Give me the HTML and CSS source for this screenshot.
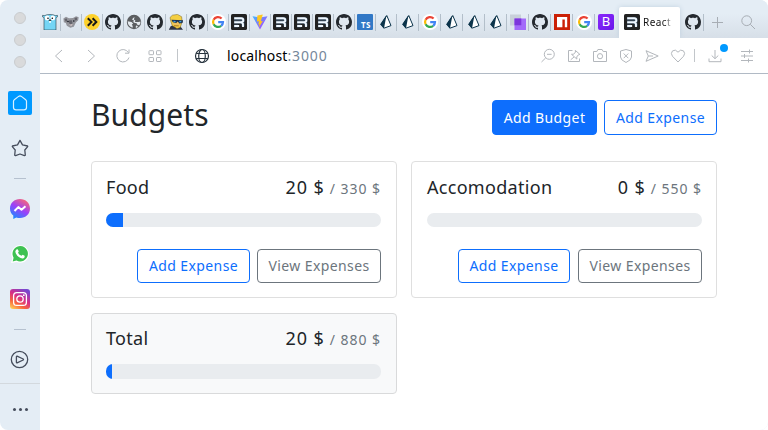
FILE: index.html
```html
<!DOCTYPE html>
<html lang="en">
<head>
<meta charset="utf-8">
<title>React App</title>
<link rel="stylesheet" href="styles.css">
</head>
<body>
<svg class="defs" aria-hidden="true">
  <defs>
    <linearGradient id="vg" x1="0" y1="0" x2="1" y2="1"><stop offset="0" stop-color="#41b9ff"/><stop offset="1" stop-color="#bd34fe"/></linearGradient>
    <linearGradient id="mg" x1=".2" y1="1" x2=".8" y2="0"><stop offset="0" stop-color="#1490ff"/><stop offset=".5" stop-color="#9a40fa"/><stop offset="1" stop-color="#ff6a70"/></linearGradient>
    <linearGradient id="ig" x1=".1" y1="1" x2=".7" y2="0"><stop offset="0" stop-color="#ffd15a"/><stop offset=".3" stop-color="#f8653c"/><stop offset=".6" stop-color="#d62e89"/><stop offset="1" stop-color="#7747cf"/></linearGradient>
  </defs>
  <symbol id="github" viewBox="0 0 16 16"><path fill="#24292f" d="M8 0C3.58 0 0 3.58 0 8c0 3.54 2.29 6.53 5.47 7.59.4.07.55-.17.55-.38 0-.19-.01-.82-.01-1.49-2.01.37-2.53-.49-2.69-.94-.09-.23-.48-.94-.82-1.13-.28-.15-.68-.52-.01-.53.63-.01 1.08.58 1.23.82.72 1.21 1.87.87 2.33.66.07-.52.28-.87.51-1.07-1.78-.2-3.64-.89-3.64-3.95 0-.87.31-1.59.82-2.15-.08-.2-.36-1.02.08-2.12 0 0 .67-.21 2.2.82.64-.18 1.32-.27 2-.27s1.36.09 2 .27c1.53-1.04 2.2-.82 2.2-.82.44 1.1.16 1.92.08 2.12.51.56.82 1.27.82 2.15 0 3.07-1.87 3.75-3.65 3.95.29.25.54.73.54 1.48 0 1.07-.01 1.93-.01 2.2 0 .21.15.46.55.38A8.01 8.01 0 0 0 16 8c0-4.42-3.58-8-8-8z"/></symbol>
  <symbol id="google" viewBox="0 0 16 16"><circle cx="8" cy="8" r="8" fill="#fff"/><g fill="none" stroke-width="2.2"><path stroke="#ea4335" d="M3.6 5.8A5 5 0 0 1 11.6 4.5"/><path stroke="#fbbc05" d="M3.6 10.2A5 5 0 0 1 3.6 5.8"/><path stroke="#34a853" d="M11.2 11.8A5 5 0 0 1 3.6 10.2"/><path stroke="#4285f4" d="M8.2 8.1H13A5 5 0 0 1 11.2 11.8"/></g></symbol>
  <symbol id="remix" viewBox="0 0 16 16"><rect width="16" height="16" rx="1.6" fill="#212121"/><path fill="none" stroke="#567a9c" stroke-width="3.2" opacity=".55" d="M3 4.600h7.200q2 0 2 1.800T10.200 8.200H3M9.500 8.300q2.400.2 2.500 2.200v2M3 12h4"/><path fill="none" stroke="#f0f8ff" stroke-width="1.900" d="M3.200 4.300h6.900q2.200 0 2.200 1.900T10.100 8.200H3.200M10 8.200q2 .3 2 2.200v2.700M3.200 12h4v1.100"/></symbol>
  <symbol id="prisma" viewBox="0 0 16 16"><path fill="#fff" stroke="#0c344b" stroke-width="1" stroke-linejoin="round" d="M8.800 1.600 13 11.600 6.200 14.100 3 10.400Z"/><path fill="#0c344b" d="M8.500 1.100 2.200 10.200 5.900 14.800Z"/></symbol>
  <symbol id="gopher" viewBox="0 0 16 16"><path fill="#74d5f5" stroke="#263b45" stroke-width=".6" d="M2 16V3.600L.5 2.800V1.400L2.800 1.600Q4.500.5 8 .5t5.200 1.100l2.300-.2v1.400L14 3.600V16Z"/><circle cx="5.200" cy="4" r="2.400" fill="#fff"/><circle cx="10.800" cy="4" r="2.400" fill="#fff"/><circle cx="6" cy="4.200" r=".8"/><circle cx="10.300" cy="4.200" r=".8"/><ellipse cx="8" cy="6.200" rx="1.400" ry=".8" fill="#333"/><path fill="#fff" d="M7.200 7h1.700v1.800H7.200z"/></symbol>
  <symbol id="koala" viewBox="0 0 16 16"><path fill="#94959b" d="M.4 4.500 3 2.800 6 4.200 10 4l3-1.800 2.700 1.100-.5 3-2.400 2.200-2 4.200-3.500 1-3.500-2-1-2.700L.8 8.200Z"/><path fill="#64646c" d="m1.500 5 2.400-.6.4 3-1.800.2Zm10-1 2.600-.4-.2 2.400-2 .5ZM6 6.500l2.800-.3.8 3-2.200 1.500L6 9Z"/><circle cx="5" cy="7.500" r=".8" fill="#141820"/><circle cx="10.800" cy="7" r=".8" fill="#141820"/><path fill="#dacaca" d="m6 10.700 3.800-.6-1.500 1.900Z"/></symbol>
  <symbol id="chevrons" viewBox="0 0 16 16"><circle cx="8" cy="8" r="8" fill="#fdd12b"/><path fill="none" stroke="#181818" stroke-width="2" d="m3.800 4.200 3.700 3.700-3.700 3.800M8.600 4.200l3.700 3.700-3.700 3.800"/></symbol>
  <symbol id="earth" viewBox="0 0 16 16"><circle cx="8" cy="8" r="7.200" fill="#5b5e61"/><path fill="#e4eaef" d="M8.700 3.300 7.800 5.400l1.600 1L8.900 7.900h3.600L14.500 7.600Q14.700 9.600 13.300 11.300L11.600 11 10.600 9.300 8.200 8.700 6.500 7.500H8L7.600 6.200 6.100 5.800 7 4ZM1.600 7.200 5.500 8l1.600 1.600-1.300 1.200 1 1.300-.3 1.700Q2 12.300 1.600 7.200ZM9.500 13l1.200-1.700 1.300 1.400-1.800 1.200Z"/></symbol>
  <symbol id="hero" viewBox="0 0 16 16"><path fill="#2d3446" d="M.8 15.800 2.800 12l2.500-.5 6.700.4 3 3.900Z"/><path fill="#f4cf43" stroke="#76621e" stroke-width=".5" d="M2.800 7.300 2 3.500 4.400 1.200 9.500.4l4.100 2.300.6 5-2 5.800-3.200 1.100-4.800-3.100Z"/><path fill="#edc15e" d="m4.700 8 8.800-.2-1.900 4.300-3 1.200-3.700-3Z"/><path fill="#1d3151" d="m3.300 5.800 11.800.5-.6 2.700-3.200.5-1.500-2L8.200 9 4.800 8.300Z"/><path stroke="#3aa4df" stroke-width="1.200" d="m5.500 7.300 2.100.4m3.700-.1 2 .1"/><path stroke="#b48318" d="m6 11.700 4.800.2"/></symbol>
  <symbol id="vite" viewBox="0 0 16 16"><path fill="url(#vg)" d="M.5 2.200 8 15.600l7.500-13.400L8 3.500Z"/><path fill="#ffc71f" d="M10.800.4 5.400 1.500 5 7.500l2-.3-.7 3.400 1.200-.3-.7 3.300L10.800 7l-2 .3 2-6.900Z"/></symbol>
  <symbol id="squares" viewBox="0 0 16 16"><path fill="#c8d0da" d="M0 .5h11v11H0z"/><path fill="#a36bfa" d="M4.500 4.500H16V16H4.500z"/><path fill="#7d36dc" d="M4.500 4.500h6.800v6.800H4.500z"/></symbol>
  <symbol id="npm" viewBox="0 0 16 16"><path fill="#cb2006" d="M0 0h16v16H0z"/><path fill="#fff" d="M3 3h10.200v10.200h-2.400V5.500H8.400v7.700H3z"/></symbol>
</svg>

<div class="window">
  <aside class="sidebar">
    <div class="lights"><i></i><i></i><i></i></div>
    <div class="home"><svg width="24" height="24" viewBox="0 0 24 24"><path d="M5.500 10.300Q5.500 9.400 6.300 8.800L10.600 5.400Q12 4.400 13.400 5.400L17.700 8.800Q18.500 9.400 18.500 10.300V16.500Q18.500 18.900 16 18.900H8Q5.500 18.900 5.500 16.500Z"/></svg></div>
    <svg class="line star" width="20" height="20" viewBox="0 0 20 20"><path d="M10 2.400 7.500 6.900 2.400 8Q2.100 8.500 2.500 8.900L5.200 12 4.700 17.200Q5 17.700 5.600 17.600L10 16 14.400 17.600Q15 17.700 15.300 17.200L14.800 12 17.500 8.900Q17.900 8.500 17.600 8L12.500 6.900Z"/></svg>
    <hr class="short first">
    <svg class="messenger" width="20" height="20" viewBox="0 0 20 20"><path fill="url(#mg)" d="M10 0C4.300 0 0 4 0 9.400c0 3 1.200 5.400 3.300 7.100V20l3-1.500q1.700.5 3.700.5c5.700 0 10-4 10-9.500S15.700 0 10 0Z"/><path fill="none" stroke="#fff" stroke-width="2" stroke-linejoin="round" d="m4.500 12 3.800-3.900 3.200 2.700 4-3.500"/></svg>
    <svg class="whatsapp" width="20" height="20" viewBox="0 0 20 20"><path fill="#fff" d="M1.100 18.900 2.300 14A8.800 8.800 0 1 1 6.500 18Z"/><path fill="#3ec252" d="m2.700 17.400.9-3.700A7.700 7.700 0 1 1 6.500 16.500Z"/><path fill="#fff" d="M6.400 5.500Q7.300 4.800 7.900 5.600l.9 1.900-.8 1.200q1.200 2.300 3.500 3.100l1.100-1 2 1q.5 2-1.500 2.600c-3.700.7-8.200-4.500-7.700-7.300Z"/></svg>
    <svg class="instagram" width="20" height="20" viewBox="0 0 20 20"><rect width="20" height="20" rx="3" fill="url(#ig)"/><g fill="none" stroke="#fff" stroke-width="1.300"><rect x="3.600" y="3.600" width="12.800" height="12.800" rx="3.200"/><circle cx="10" cy="10" r="3.200"/></g><circle cx="13.800" cy="6.200" r=".9" fill="#fff"/></svg>
    <hr class="short second">
    <svg class="line play" width="20" height="20" viewBox="0 0 20 20"><circle cx="9.500" cy="9.500" r="8.200"/><path d="M6.400 6.700Q6.400 6 7.100 6.200L13.200 9Q13.800 9.500 13.200 10L7.100 12.800Q6.400 13 6.400 12.300Z"/></svg>
    <div class="more"><i></i><i></i><i></i></div>
  </aside>

  <div class="main">
    <div class="tabs">
      <div class="tab"><svg><use href="#gopher"/></svg></div>
      <div class="tab"><svg><use href="#koala"/></svg></div>
      <div class="tab"><svg><use href="#chevrons"/></svg></div>
      <div class="tab"><svg><use href="#github"/></svg></div>
      <div class="tab"><svg><use href="#earth"/></svg></div>
      <div class="tab"><svg><use href="#github"/></svg></div>
      <div class="tab"><svg><use href="#hero"/></svg></div>
      <div class="tab"><svg><use href="#github"/></svg></div>
      <div class="tab"><svg><use href="#google"/></svg></div>
      <div class="tab"><svg><use href="#remix"/></svg></div>
      <div class="tab"><svg><use href="#vite"/></svg></div>
      <div class="tab"><svg><use href="#remix"/></svg></div>
      <div class="tab"><svg><use href="#remix"/></svg></div>
      <div class="tab"><svg><use href="#remix"/></svg></div>
      <div class="tab"><svg><use href="#github"/></svg></div>
      <div class="tab"><div class="ts-icon">TS</div></div>
      <div class="tab"><svg><use href="#prisma"/></svg></div>
      <div class="tab wide"><svg><use href="#prisma"/></svg></div>
      <div class="tab wide"><svg><use href="#google"/></svg></div>
      <div class="tab wide"><svg><use href="#prisma"/></svg></div>
      <div class="tab wide"><svg><use href="#prisma"/></svg></div>
      <div class="tab wide"><svg><use href="#prisma"/></svg></div>
      <div class="tab wide"><svg><use href="#squares"/></svg></div>
      <div class="tab wide"><svg><use href="#github"/></svg></div>
      <div class="tab wide"><svg><use href="#npm"/></svg></div>
      <div class="tab wide"><svg><use href="#google"/></svg></div>
      <div class="tab wide last"><div class="bs-icon">B</div></div>
      <div class="tab active"><svg><use href="#remix"/></svg><span>React</span></div>
      <div class="tab after"><svg><use href="#github"/></svg></div>
      <svg class="tool plus" viewBox="0 0 16 16"><path d="M8.500 3v11M3 8.500h11"/></svg>
      <svg class="tool find" viewBox="0 0 16 16"><circle cx="6.700" cy="6.700" r="4.900"/><path d="m10.300 10.300 4.700 4.700"/></svg>
    </div>

    <div class="toolbar">
      <svg class="nav back" viewBox="0 0 16 16"><path d="M11 2 4.500 8l6.500 6"/></svg>
      <svg class="nav forward" viewBox="0 0 16 16"><path d="m5 2 6.500 6L5 14"/></svg>
      <svg class="nav reload" viewBox="0 0 16 16"><path d="M13.400 4.600A6.200 6.200 0 1 0 14 9.500M14 1.500v3.700h-4"/></svg>
      <svg class="nav grid" viewBox="0 0 16 16"><rect x="2" y="2.700" width="4.500" height="4" rx=".6"/><rect x="9.500" y="2.700" width="4.500" height="4" rx=".6"/><rect x="2" y="9.500" width="4.500" height="4" rx=".6"/><rect x="9.500" y="9.500" width="4.500" height="4" rx=".6"/></svg>
      <i class="divider one"></i>
      <svg class="globe" viewBox="0 0 16 16"><circle cx="8" cy="8" r="6.500"/><ellipse cx="8" cy="8" rx="3.300" ry="6.500"/><path d="M2.200 5.500h11.600M2.200 10.500h11.600"/></svg>
      <div class="url">localhost<span>:3000</span></div>
      <div class="actions">
        <svg viewBox="0 0 16 16"><circle cx="9.300" cy="6.300" r="5"/><path d="M5.700 9.900 1.500 14M7 6.300h4.600"/></svg>
        <svg viewBox="0 0 16 16"><path d="M6.500 2.500h-4v11h11v-3M9.300 2.400l4.600 4-1.600.5-1.600 2.100.2 2.100-5.400-4.800 2.200-.1 1.800-2.200ZM8 9l-3.300 2.800"/></svg>
        <svg viewBox="0 0 16 16"><path d="M1.500 3.500h3.300l1.100-2h4.200l1.100 2h3.300v10h-13Z"/><circle cx="8" cy="8.200" r="2.600"/></svg>
        <svg viewBox="0 0 16 16"><path d="M8 1.500 13.500 3v6Q13.500 12 8 14.500 2.500 12 2.500 9V3ZM5.700 5.500l4.600 4.700m0-4.700-4.600 4.700"/></svg>
        <svg viewBox="0 0 16 16"><path d="M2 2.700 14.200 8 2 13.300 4.300 8ZM4.300 8H9"/></svg>
        <svg viewBox="0 0 16 16"><path d="M8 14 2.400 8.200Q.3 5.300 2.500 2.900 5.500.7 8 4.200 10.500.7 13.500 2.900 15.700 5.300 13.600 8.200Z"/></svg>
      </div>
      <i class="divider two"></i>
      <div class="download"><svg viewBox="0 0 16 16"><path d="M8 2v8.500M4.700 7.500 8 10.700l3.300-3.200M2 10.500v3.200h12v-3.200"/></svg><b></b></div>
      <svg class="sliders" viewBox="0 0 16 16"><path d="M2 3.500h12M2 8h12M2 12.500h12M10.500 1.500v4M5.500 6v4M9.500 10.500v4"/></svg>
    </div>

    <main class="page">
      <header class="page-head">
        <h1>Budgets</h1>
        <button class="btn primary">Add Budget</button>
        <button class="btn outline">Add Expense</button>
      </header>
      <div class="cards">
        <section class="card">
          <div class="card-title"><h2>Food</h2><div class="amount">20 $<small>/ 330 $</small></div></div>
          <div class="progress"><div class="bar" style="width:6.06%"></div></div>
          <div class="card-actions"><button class="btn outline">Add Expense</button><button class="btn secondary">View Expenses</button></div>
        </section>
        <section class="card right">
          <div class="card-title"><h2>Accomodation</h2><div class="amount">0 $<small>/ 550 $</small></div></div>
          <div class="progress"></div>
          <div class="card-actions"><button class="btn outline">Add Expense</button><button class="btn secondary">View Expenses</button></div>
        </section>
        <section class="card total">
          <div class="card-title"><h2>Total</h2><div class="amount">20 $<small>/ 880 $</small></div></div>
          <div class="progress"><div class="bar" style="width:2.27%"></div></div>
        </section>
      </div>
    </main>
  </div>
</div>
</body>
</html>
```
FILE: styles.css
```css
* { box-sizing: border-box; }
body { margin: 0; background: #fff; font-family: "Noto Sans", sans-serif; color: #212529; }
svg { display: block; flex: none; }
.defs { position: absolute; width: 0; height: 0; }
.window { display: flex; width: 768px; height: 430px; overflow: hidden; border-radius: 8px; background: #e4edf5; }

.sidebar { width: 40px; display: flex; flex-direction: column; align-items: center; }
.lights { display: flex; flex-direction: column; gap: 10px; padding-top: 12px; }
.lights i { width: 12px; height: 12px; border: 1px solid #c9cccf; border-radius: 50%; background: #d9dadb; }
.home { width: 24px; height: 24px; margin-top: 23px; border-radius: 2px; background: #0099ff; }
.home path { fill: none; stroke: #d9f0ff; stroke-width: 1.2; }
.line { fill: none; stroke: #454d5c; stroke-width: 1.3; stroke-linejoin: round; }
.star { margin-top: 23px; }
hr { margin: 0; border: 0; }
.short { width: 12px; height: 1px; background: #b6c1cf; }
.first { margin-top: 20px; }
.messenger { margin-top: 20px; }
.whatsapp { margin-top: 25px; }
.instagram { margin-top: 25px; }
.second { margin-top: 20px; }
.play { margin-top: 20px; }
.more { width: 40px; height: 47px; margin-top: 13px; padding-top: 5px; border-top: 1px solid #d3d9de; display: flex; justify-content: center; align-items: center; gap: 3px; }
.more i { width: 3px; height: 3px; border-radius: 50%; background: #454d5c; }

.main { flex: 1; min-width: 0; display: flex; flex-direction: column; }
.tabs { height: 38px; display: flex; align-items: flex-end; background: linear-gradient(#e4edf5 35%, #d7dfe8); }
.tab { width: 21px; height: 24px; padding: 0 0 0 2px; position: relative; flex: none; }
.tab svg { width: 16px; height: 16px; }
.tab::after { content: ""; position: absolute; top: 0; right: 0; width: 1px; height: 17px; background: #b3bfca; }
.wide { width: 22px; padding-left: 3px; }
.last::after, .active::after { display: none; }
.active { width: 61px; height: 31px; margin-left: 2px; padding: 7px 4px 0 5px; display: flex; gap: 3px; background: #fff; border-radius: 2px 2px 0 0; box-shadow: 0 0 5px #c0d0df; clip-path: inset(-5px -5px 0); }
.active span { margin-top: 1px; font-size: 10px; line-height: 14px; letter-spacing: .45px; background: linear-gradient(90deg, #111 75%, #bbb); -webkit-background-clip: text; color: transparent; }
.after { width: 24px; padding-left: 5px; }
.tool { width: 16px; height: 16px; margin-bottom: 8px; fill: none; stroke: #a7adb4; stroke-width: 1; }
.plus { margin-left: 5px; }
.find { margin-left: 15px; }
.ts-icon, .bs-icon { width: 16px; height: 16px; color: #fff; }
.ts-icon { padding: 5px 0 0 4px; background: #3178c6; font-size: 8px; line-height: 11px; font-weight: 700; letter-spacing: .3px; border-radius: 1px; }
.bs-icon { border-radius: 2px; background: linear-gradient(135deg, #8a28fb, #6a17ea); font-size: 13px; line-height: 15px; text-align: center; }

.toolbar { height: 36px; display: flex; align-items: center; background: #fff; border-bottom: 1px solid #b1bac5; }
.toolbar svg { width: 16px; height: 16px; fill: none; stroke: #b3b7bc; stroke-width: 1; }
.back { margin-left: 11px; }
.forward { margin-left: 16px; }
.reload { margin-left: 16px; }
.toolbar .grid { margin-left: 16px; }
.divider { width: 1px; height: 13px; background: #c2c6ca; }
.one { margin-left: 14px; }
.toolbar .globe { margin-left: 16px; stroke: #26323d; stroke-width: 1.2; }
.url { width: 120px; margin-left: 17px; font-size: 14px; letter-spacing: .15px; color: #000; }
.url span { color: #75879a; letter-spacing: .85px; }
.actions { display: flex; gap: 10px; margin-left: 193px; }
.two { margin-left: 8px; }
.download { position: relative; margin-left: 12px; }
.download b { position: absolute; top: -4px; right: -5px; width: 8px; height: 8px; border-radius: 50%; background: #0099ff; }
.sliders { margin-left: 16px; }

.page { flex: 1; padding: 26px 51px 0; background: #fff; }
.page-head { display: flex; height: 35px; gap: 7px; }
.page-head .btn { height: 35px; }
h1, h2 { margin: 0; font-weight: 400; }
h1 { margin-right: auto; font-size: 30px; line-height: 29px; letter-spacing: .1px; }
.btn { height: 34px; padding: 0 0 2px; width: 113px; border: 1px solid; border-radius: 4px; background: transparent; font: 14px "Noto Sans", sans-serif; letter-spacing: .4px; white-space: nowrap; }
.page-head .btn { padding-bottom: 0; }
.primary { width: 105px; color: #fff; background: #0d6efd; border-color: #0d6efd; }
.outline { color: #0d6efd; }
.secondary { width: 124px; color: #6c757d; }
.cards { display: grid; grid-template-columns: 306px 306px; gap: 15px 14px; align-items: start; margin-top: 26px; }
.card { height: 137px; padding: 14px 15px 14px 14px; border: 1px solid #dfdfdf; border-radius: 4px; }
.right { padding: 14px 14px 14px 15px; }
.right .outline { width: 112px; }
.right .card-actions { gap: 8px; }
.total { height: 81px; padding-top: 13px; background: #f8f9fa; border-color: #d9dadb; }
.total .progress { height: 15px; }
.card-title { display: flex; height: 23px; justify-content: space-between; align-items: baseline; line-height: 23px; }
h2 { font-size: 18px; letter-spacing: .3px; }
.amount { font-size: 18px; letter-spacing: .95px; white-space: nowrap; }
small { margin-left: 5px; font-size: 14px; color: #6c757d; letter-spacing: .95px; }
.progress { height: 14px; margin-top: 14px; overflow: hidden; border-radius: 7px; background: #e9ecef; }
.bar { height: 100%; background: #0d6efd; }
.card-actions { display: flex; justify-content: flex-end; gap: 7px; margin-top: 22px; }
```
